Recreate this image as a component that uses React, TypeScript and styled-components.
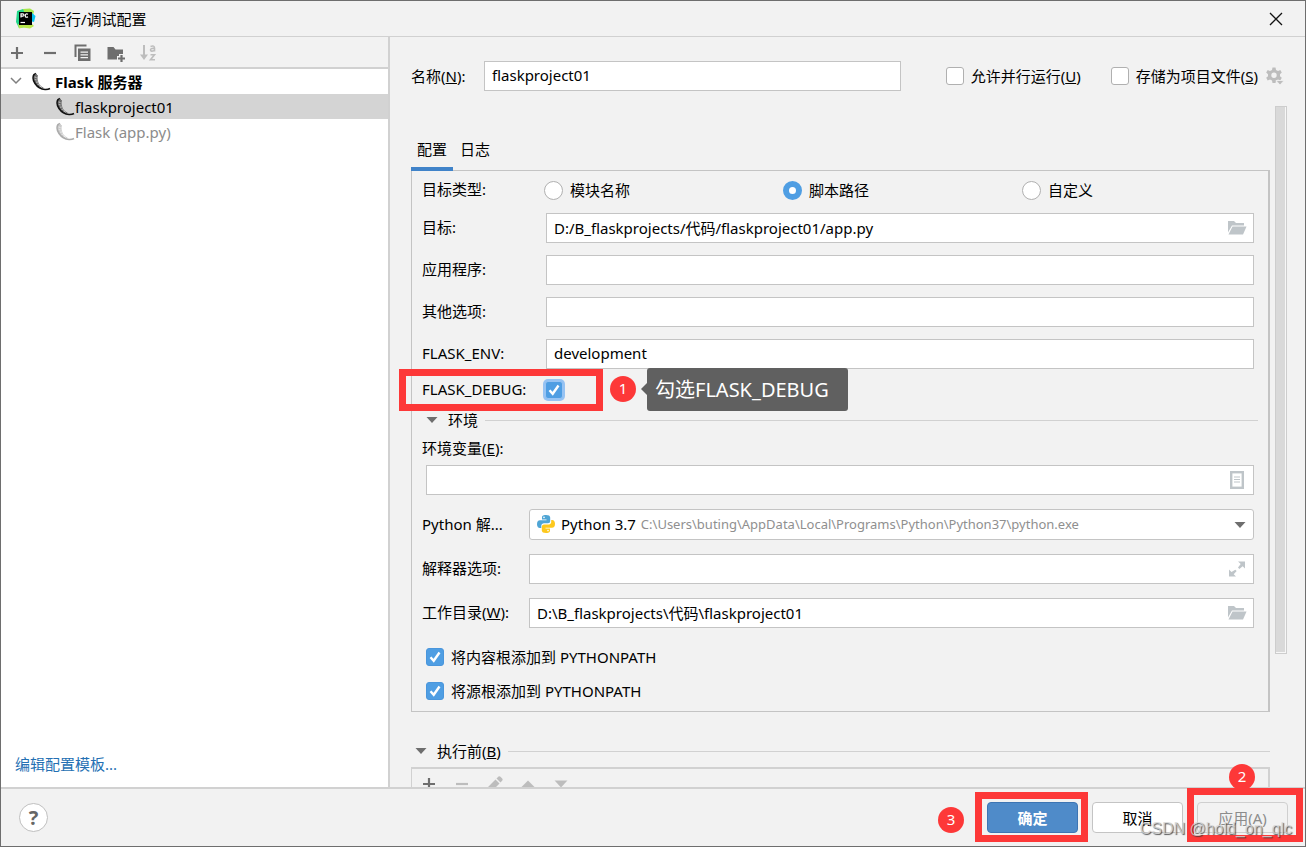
import React from 'react';
import styled, { createGlobalStyle, css } from 'styled-components';

const RED = '#fd3838';
const LINE = '#d1d1d1';
const EDGE = '#c4c4c4';

const GlobalStyle = createGlobalStyle`
  *, *::before, *::after { box-sizing: border-box; }
  body { margin: 0; background: #f2f2f2; }
  body, input, button, select {
    font-family: 'Noto Sans', 'Noto Sans CJK SC', sans-serif;
    font-size: 15px;
    line-height: 20px;
    color: #000;
  }
`;

const Dialog = styled.main`
  display: flex;
  flex-direction: column;
  height: 100vh;
  min-width: 960px;
  background: #f2f2f2;
  border: 1px solid #6e6e6e;
  overflow: hidden;
`;

const TitleBar = styled.header`
  display: flex;
  align-items: center;
  gap: 15px;
  height: 36px;
  padding: 0 22px 0 14px;
  border-bottom: 1px solid ${LINE};
`;

const Title = styled.h1`
  flex: 1;
  margin: 0;
  font-size: 15px;
  font-weight: 400;
`;

const IconButton = styled.button<{ $size?: number }>`
  display: flex;
  align-items: center;
  justify-content: center;
  flex: none;
  width: ${(p) => p.$size ?? 20}px;
  height: ${(p) => p.$size ?? 20}px;
  padding: 0;
  border: 0;
  background: none;
`;

const Body = styled.div`
  display: flex;
  flex: 1;
  min-height: 0;
  border-bottom: 2px solid ${LINE};
`;

const Sidebar = styled.aside`
  display: flex;
  flex-direction: column;
  flex: 0 0 389px;
  background: #fff;
  border-right: 2px solid ${LINE};
`;

const Toolbar = styled.div`
  display: flex;
  align-items: center;
  gap: 13px;
  height: 32px;
  padding: 2px 6px 0;
  background: #f2f2f2;
  border-bottom: 2px solid ${LINE};
`;

const Tree = styled.ul`
  flex: 1;
  margin: 0;
  padding: 0;
  list-style: none;
`;

const TreeRow = styled.li<{ $level?: number; $selected?: boolean; $muted?: boolean; $bold?: boolean }>`
  display: flex;
  align-items: center;
  gap: ${(p) => (p.$level ? 0 : 4)}px;
  height: 25px;
  padding-left: ${(p) => (p.$level ? 54 : 6)}px;
  background: ${(p) => (p.$selected ? '#d4d4d4' : 'transparent')};
  color: ${(p) => (p.$muted ? '#8c8c8c' : '#000')};
  font-weight: ${(p) => (p.$bold ? 700 : 400)};
`;

const TemplatesLink = styled.a`
  margin: 0 14px 13px;
  color: #2470b3;
  text-decoration: none;
`;

const Editor = styled.section`
  display: flex;
  flex-direction: column;
  flex: 1;
  min-width: 0;
`;

const NameRow = styled.div`
  display: flex;
  align-items: center;
  height: 69px;
  padding: 9px 20px 0 21px;
`;

const NameLabel = styled.label`
  flex: 0 0 73px;
`;

const NameChecks = styled.div`
  display: flex;
  align-items: center;
  gap: 30px;
  margin-left: 45px;
`;

const StoreGroup = styled.div`
  display: flex;
  align-items: center;
  gap: 7px;
`;

const Field = styled.div<{ $combo?: boolean }>`
  display: flex;
  align-items: center;
  flex: 1;
  min-width: 0;
  height: ${(p) => (p.$combo ? 31 : 30)}px;
  padding-right: ${(p) => (p.$combo ? 7 : 6)}px;
  background: #fff;
  border: 1px solid ${EDGE};
  border-radius: ${(p) => (p.$combo ? 3 : 0)}px;
`;

const TextInput = styled.input`
  flex: 1;
  min-width: 0;
  height: 28px;
  padding: 0 7px 2px;
  border: 0;
  outline: 0;
  background: transparent;
`;

const Scroller = styled.div`
  display: flex;
  flex: 1;
  min-height: 0;
  padding: 0 18px 0 21px;
  overflow: hidden;
`;

const Content = styled.div`
  flex: 1;
  min-width: 0;
  margin-right: 5px;
  padding-top: 27px;
`;

const ScrollTrack = styled.div`
  flex: 0 0 12px;
  height: 548px;
  background: #d9d9d9;
  border: 1px solid #cdcdcd;
  box-shadow: inset -1px -1px 0 #f7f7f7;
`;

const Tabs = styled.div`
  display: flex;
  align-items: stretch;
  gap: 1px;
  height: 37px;
`;

const Tab = styled.button<{ $active?: boolean }>`
  position: relative;
  padding: 0 6px 6px;
  border: 0;
  background: none;
  ${(p) =>
    p.$active &&
    css`
      &::after {
        content: '';
        position: absolute;
        left: 0;
        right: 0;
        bottom: -1px;
        height: 4px;
        background: #4083c9;
      }
    `}
`;

const Panel = styled.div`
  padding: 0 14px 3px 10px;
  border: 1px solid ${EDGE};
  border-right-width: 2px;
`;

const Row = styled.div<{ $gap?: number }>`
  display: flex;
  align-items: center;
  margin-bottom: ${(p) => p.$gap ?? 12}px;
`;

const RowLabel = styled.label<{ $width: number }>`
  flex: 0 0 ${(p) => p.$width}px;
  padding-bottom: 2px;
  white-space: nowrap;
`;

const TypeRow = styled.div`
  display: flex;
  align-items: center;
  height: 42px;
  margin-right: -7px;
  padding-bottom: 4px;
`;

const RadioGroup = styled.div`
  display: grid;
  grid-template-columns: repeat(3, 1fr);
  flex: 1;
`;

const RadioLabel = styled.label`
  display: flex;
  align-items: center;
  gap: 7px;
`;

const Radio = styled.input.attrs({ type: 'radio' })`
  appearance: none;
  width: 19px;
  height: 19px;
  margin: 0;
  border: 1px solid #b0b0b0;
  border-radius: 50%;
  background: #fff;
  &:checked {
    border: 6px solid #4f9ee3;
  }
`;

const CheckLabel = styled.label<{ $tall?: boolean }>`
  display: flex;
  align-items: center;
  flex: none;
  gap: 7px;
  height: ${(p) => (p.$tall ? 34 : 20)}px;
  padding-left: ${(p) => (p.$tall ? 4 : 0)}px;
`;

const CheckBox = styled.span`
  position: relative;
  display: block;
  width: 18px;
  height: 18px;
  svg {
    position: absolute;
    inset: 0;
    pointer-events: none;
  }
`;

const CheckInput = styled.input.attrs({ type: 'checkbox' })<{ $focus?: boolean }>`
  appearance: none;
  display: block;
  width: 18px;
  height: 18px;
  margin: 0;
  border: 1px solid #b0b0b0;
  border-radius: 3px;
  background: #fff;
  box-shadow: ${(p) => (p.$focus ? '0 0 0 2px #97c3f3' : 'none')};
  &:checked {
    border-color: ${(p) => (p.$focus ? '#97c3f3' : '#4a96dc')};
    background: #4f9ee3;
  }
  &:not(:checked) + svg {
    display: none;
  }
`;

const DebugRow = styled.div`
  position: relative;
  display: flex;
  align-items: center;
  height: 41px;
  margin-top: -12px;
`;

const Outline = styled.span<{ $left: number; $top: number; $width: number; $height: number }>`
  position: absolute;
  left: ${(p) => p.$left}px;
  top: ${(p) => p.$top}px;
  width: ${(p) => p.$width}px;
  height: ${(p) => p.$height}px;
  border: 7px solid ${RED};
  pointer-events: none;
`;

const Badge = styled.span<{ $left: number; $top: number }>`
  position: absolute;
  left: ${(p) => p.$left}px;
  top: ${(p) => p.$top}px;
  width: 26px;
  height: 26px;
  border-radius: 50%;
  background: ${RED};
  color: #fff;
  line-height: 24px;
  text-align: center;
`;

const Tip = styled.span`
  position: absolute;
  left: 225px;
  top: -1px;
  display: flex;
  align-items: center;
  height: 43px;
  padding: 0 19px 0 8px;
  border-radius: 3px;
  background: #606060;
  color: #fff;
  font-size: 20px;
  white-space: nowrap;
  &::before {
    content: '';
    position: absolute;
    left: -6px;
    top: 15px;
    border: 6px solid transparent;
    border-left: 0;
    border-right-color: #606060;
  }
`;

const SectionHead = styled.div<{ $outer?: boolean }>`
  display: flex;
  align-items: center;
  gap: 7px;
  height: ${(p) => (p.$outer ? 24 : 20)}px;
  margin: ${(p) => (p.$outer ? '27px 0 4px' : '0 -4px 0 0')};
  padding-left: 4px;
  svg {
    margin-right: 3px;
  }
  &::after {
    content: '';
    flex: 1;
    height: 1px;
    background: ${LINE};
  }
`;

const EnvLabel = styled.label`
  display: block;
  height: 35px;
  padding-top: 8px;
`;

const EnvRow = styled(Row)`
  padding-left: 4px;
`;

const Combo = styled.div`
  position: relative;
  display: flex;
  align-items: center;
  flex: 1;
  min-width: 0;
  height: 29px;
  padding: 0 0 2px 6px;
  gap: 5px;
  white-space: nowrap;
`;

const ComboSelect = styled.select`
  position: absolute;
  inset: 0;
  width: 100%;
  height: 100%;
  opacity: 0;
`;

const Path = styled.span`
  color: #8f8f8f;
  font-size: 13px;
`;

const TaskBar = styled.div`
  display: flex;
  align-items: center;
  gap: 13px;
  height: 34px;
  padding: 0 7px 2px;
  border: 2px solid ${LINE};
  border-left-width: 1px;
  border-bottom: 0;
`;

const Footer = styled.footer`
  display: flex;
  align-items: center;
  justify-content: space-between;
  flex: none;
  height: 57px;
  padding: 0 17px 0 18px;
`;

const HelpButton = styled.button`
  width: 29px;
  height: 29px;
  padding: 0;
  border: 1px solid #bfbfbf;
  border-radius: 50%;
  background: #fff;
  color: #666;
  font-size: 20px;
  font-weight: 700;
`;

const Actions = styled.div`
  display: flex;
  gap: 14px;
`;

const ActionSlot = styled.div`
  position: relative;
`;

const ActionButton = styled.button<{ $kind: 'primary' | 'plain' | 'disabled' }>`
  display: block;
  width: 91px;
  height: 31px;
  padding: 0;
  border: 1px solid #c4c4c4;
  border-radius: 4px;
  background: #fff;
  ${(p) =>
    p.$kind === 'primary' &&
    css`
      border-color: #3d75b3;
      background: #4f8bc9;
      color: #fff;
      font-weight: 700;
    `}
  ${(p) =>
    p.$kind === 'disabled' &&
    css`
      border-color: #cfcfcf;
      background: #f2f2f2;
      color: #8c8c8c;
    `}
`;

const Watermark = styled.span`
  position: absolute;
  right: -4px;
  top: 17px;
  color: rgba(215, 215, 215, 0.8);
  font-family: 'Liberation Sans', sans-serif;
  font-size: 16px;
  text-shadow: 1px 1px 1px rgba(50, 50, 50, 0.8);
  white-space: nowrap;
  pointer-events: none;
`;

const Mnemonic = ({ text, letter, end = '' }: { text: string; letter: string; end?: string }) => (
  <span>
    {text}(<u>{letter}</u>){end}
  </span>
);

const FlaskIcon = ({ faded }: { faded?: boolean }) => (
  <svg width="20" height="20" viewBox="0 0 20 20" opacity={faded ? 0.35 : 1} aria-hidden="true">
    <path d="M3.5 2C2 3.500 1.800 6.500 3.300 10C5.300 14 8.500 16.500 12.500 17.200C10 15.800 8 13.800 6.800 11.200C5.600 8.500 5.500 5.500 6.300 3.500Z" fill="#666" />
    <path d="M5 1.300L3 2.500C1.500 5 2 8.500 4 11.500C6.500 15.200 10 17.300 14 17.500C16 17.600 17.800 17.200 19 16.500" fill="none" stroke="#111" strokeWidth="1.500" />
    <path d="M4.500 1.500L6.500 3.500C5.800 5.500 6 8.500 7.200 11C8.300 13.200 10 15 12.500 16" fill="none" stroke="#444" strokeWidth="0.700" />
    <path d="M3.600 5L5.500 5.400M3.800 7.600L5.600 8M5 10.200L6.500 10M6.600 12.600L7.800 12M8.800 14.600L9.800 13.800" stroke="#eee" strokeWidth="0.700" />
  </svg>
);

const PyCharmIcon = () => (
  <svg width="21" height="21" viewBox="0 0 21 21" aria-hidden="true">
    <path d="M2 3L8 1L13 3L10 19L4 20L1 14Z" fill="#21d789" />
    <path d="M8 1L15 0.500L19 3L18 8L10 6Z" fill="#a8e64a" />
    <path d="M17 5L20.500 8L19 14L15 13Z" fill="#07c3f2" />
    <path d="M3 16L17 16L19 18L15 20.500L8 19.500L4 20.500Z" fill="#b8e84c" />
    <rect x="4" y="4" width="13" height="13" />
    <path d="M6 9.500V5.800H7.700Q9 5.800 9 7T7.700 8.200H6.300M13 6.300Q10.500 5 10.300 7.500T13 8.900" fill="none" stroke="#fff" strokeWidth="1.200" />
    <path d="M5.500 14.500H10" stroke="#fff" strokeWidth="1.200" />
  </svg>
);

const PythonIcon = () => (
  <svg width="20" height="20" viewBox="0 0 20 20" aria-hidden="true">
    <path d="M10 1C6.500 1 6 2.200 6 3.500V5.500H10.500V6.200H4C2 6.200 1 7.800 1 10.200S2.200 14 3.800 14H5.300V11.800C5.300 10.200 6.500 9.300 8 9.300H12C13.300 9.300 14.200 8.300 14.200 7V3.500C14.200 1.800 12.500 1 10 1Z" fill="#4fa5d5" />
    <path d="M10 19C13.500 19 14 17.800 14 16.500V14.500H9.500V13.800H16C18 13.800 19 12.200 19 9.800S17.800 6 16.200 6H15.200V8.200C15.200 9.800 13.500 10.500 12 10.500H8C6.700 10.500 5.800 11.700 5.800 13V16.500C5.800 18.200 7.500 19 10 19Z" fill="#fdc81d" />
    <circle cx="8" cy="3.400" r="0.800" fill="#fff" />
    <circle cx="12" cy="16.600" r="0.800" fill="#fff" />
  </svg>
);

const PlusIcon = () => (
  <svg width="14" height="14" viewBox="0 0 14 14" aria-hidden="true">
    <path d="M7 1V13M1 7H13" stroke="#6e6e6e" strokeWidth="2.200" />
  </svg>
);

const MinusIcon = ({ color = '#6e6e6e' }: { color?: string }) => (
  <svg width="14" height="14" viewBox="0 0 14 14" aria-hidden="true">
    <path d="M1 7H13" stroke={color} strokeWidth="2.200" />
  </svg>
);

const CopyIcon = () => (
  <svg width="18" height="18" viewBox="0 0 18 18" aria-hidden="true">
    <path d="M1.500 13V1.500H12.500" fill="none" stroke="#6e6e6e" strokeWidth="2" />
    <path d="M4 4.500H16.500V17H4ZM6.500 7.500V8.700H14V7.500ZM6.500 10.300V11.500H14V10.300ZM6.500 13.100V14.300H14V13.100Z" fill="#6e6e6e" fillRule="evenodd" />
  </svg>
);

const NewFolderIcon = () => (
  <svg width="20" height="18" viewBox="0 0 20 18" aria-hidden="true">
    <path d="M1.500 3H7.500L9.500 5.500H17V10H13V12H11V15.500H1.500Z" fill="#6e6e6e" />
    <path d="M15.500 11V18M12 14.500H19" stroke="#6e6e6e" strokeWidth="2.200" />
  </svg>
);

const SortIcon = () => (
  <svg width="18" height="18" viewBox="0 0 18 18" fill="none" stroke="#bdbdbd" aria-hidden="true">
    <path d="M4 1V13" strokeWidth="2" />
    <path d="M0 10.500H8L4 16Z" fill="#bdbdbd" stroke="none" />
    <path d="M10.500 2.500Q14.500 1 14.500 4V7.500M14.500 4.500Q10.500 4 10.500 6T14.500 6.500M10.500 10.800H14.500L10.500 15.800H15" strokeWidth="1.600" />
  </svg>
);

const ChevronIcon = () => (
  <svg width="14" height="14" viewBox="0 0 14 14" aria-hidden="true">
    <path d="M1 3L6 8L11 3" fill="none" stroke="#7f7f7f" strokeWidth="1.500" />
  </svg>
);

const CloseIcon = () => (
  <svg width="14" height="14" viewBox="0 0 14 14" aria-hidden="true">
    <path d="M1 1L13 13M13 1L1 13" stroke="#111" strokeWidth="1.300" />
  </svg>
);

const GearIcon = () => (
  <svg width="18" height="18" viewBox="0 0 18 18" aria-hidden="true">
    <g fill="#bdbdbd">
      <path d="M6.500 0.500H9.500L10 3L12 4L14.300 3L15.800 5.600L14 7.200V9.200L15.800 10.800L14.300 13.400L12 12.500L10 13.500L9.500 16H6.500L6 13.500L4 12.500L1.700 13.400L0.200 10.800L2 9.200V7.200L0.200 5.600L1.700 3L4 4L6 3ZM8 5.500A2.700 2.700 0 1 0 8 10.900A2.700 2.700 0 1 0 8 5.500Z" fillRule="evenodd" />
      <path d="M10 13.500H18L14 18Z" stroke="#f2f2f2" strokeWidth="0.800" />
    </g>
  </svg>
);

const FolderIcon = () => (
  <svg width="20" height="16" viewBox="0 0 20 16" aria-hidden="true">
    <path d="M1 1H7L9 3H17V5.500H5L1 12.500Z" fill="#bfc5c9" />
    <path d="M5.500 6.500H19.500L16 14.500H1.500Z" fill="#bfc5c9" />
  </svg>
);

const ListIcon = () => (
  <svg width="20" height="20" viewBox="0 0 20 20" aria-hidden="true">
    <rect x="4.200" y="2.200" width="11.600" height="15.600" fill="none" stroke="#bfc5c9" strokeWidth="2.400" />
    <path d="M7 7H13M7 9.500H13M7 12H13" stroke="#bfc5c9" strokeWidth="1.200" />
  </svg>
);

const ExpandIcon = () => (
  <svg width="20" height="20" viewBox="0 0 20 20" aria-hidden="true">
    <path d="M11 2.500H18V9.500L15.700 7.200L12.300 10L11 8.600L13.700 5ZM2 10.500V17.500H9L6.700 15.200L9.700 12L8.300 10.700L4.500 13Z" fill="#bfc5c9" />
  </svg>
);

const Triangle = ({ color = '#6e6e6e', up, size = 12 }: { color?: string; up?: boolean; size?: number }) => (
  <svg width={size} height={size} viewBox="0 0 12 12" aria-hidden="true">
    <path d={up ? 'M0 9L6 3L12 9Z' : 'M0.500 3L6 9L11.500 3Z'} fill={color} />
  </svg>
);

const PencilIcon = () => (
  <svg width="18" height="18" viewBox="0 0 18 18" fill="#bdbdbd" aria-hidden="true">
    <path d="M1 17V13L9.500 4.500L13.500 8.500L5 17ZM10.500 3.500L12.500 1.500Q13.500 0.800 14.500 1.800L16.200 3.500Q17 4.500 16.300 5.500L14.500 7.500Z" />
  </svg>
);

const Check = ({ checked, focus }: { checked?: boolean; focus?: boolean }) => (
  <CheckBox>
    <CheckInput defaultChecked={checked} $focus={focus} />
    <svg width="18" height="18" viewBox="0 0 18 18" aria-hidden="true">
      <path d="M4.500 9.200L7.700 12.800L13.500 4.500" fill="none" stroke="#fff" strokeWidth="2.400" />
    </svg>
  </CheckBox>
);

const PATH = 'C:\\Users\\buting\\AppData\\Local\\Programs\\Python\\Python37\\python.exe';

export default function App() {
  return (
    <>
      <GlobalStyle />
      <Dialog>
        <TitleBar>
          <PyCharmIcon />
          <Title>运行/调试配置</Title>
          <IconButton $size={14} aria-label="关闭"><CloseIcon /></IconButton>
        </TitleBar>
        <Body>
          <Sidebar>
            <Toolbar>
              <IconButton aria-label="添加"><PlusIcon /></IconButton>
              <IconButton aria-label="移除"><MinusIcon /></IconButton>
              <IconButton aria-label="复制"><CopyIcon /></IconButton>
              <IconButton aria-label="新建文件夹"><NewFolderIcon /></IconButton>
              <IconButton aria-label="排序"><SortIcon /></IconButton>
            </Toolbar>
            <Tree>
              <TreeRow $bold>
                <IconButton aria-label="折叠"><ChevronIcon /></IconButton>
                <FlaskIcon />
                Flask 服务器
              </TreeRow>
              <TreeRow $level={1} $selected><FlaskIcon />flaskproject01</TreeRow>
              <TreeRow $level={1} $muted><FlaskIcon faded />Flask (app.py)</TreeRow>
            </Tree>
            <TemplatesLink href="#templates">编辑配置模板...</TemplatesLink>
          </Sidebar>
          <Editor>
            <NameRow>
              <NameLabel htmlFor="name"><Mnemonic text="名称" letter="N" end=":" /></NameLabel>
              <Field><TextInput id="name" defaultValue="flaskproject01" /></Field>
              <NameChecks>
                <CheckLabel><Check /><Mnemonic text="允许并行运行" letter="U" /></CheckLabel>
                <StoreGroup>
                  <CheckLabel><Check /><Mnemonic text="存储为项目文件" letter="S" /></CheckLabel>
                  <IconButton aria-label="设置"><GearIcon /></IconButton>
                </StoreGroup>
              </NameChecks>
            </NameRow>
            <Scroller>
              <Content>
                <Tabs role="tablist">
                  <Tab role="tab" $active>配置</Tab>
                  <Tab role="tab">日志</Tab>
                </Tabs>
                <Panel>
                  <TypeRow>
                    <RowLabel as="span" $width={122}>目标类型:</RowLabel>
                    <RadioGroup>
                      <RadioLabel><Radio name="type" />模块名称</RadioLabel>
                      <RadioLabel><Radio name="type" defaultChecked />脚本路径</RadioLabel>
                      <RadioLabel><Radio name="type" />自定义</RadioLabel>
                    </RadioGroup>
                  </TypeRow>
                  <Row>
                    <RowLabel $width={124} htmlFor="target">目标:</RowLabel>
                    <Field>
                      <TextInput id="target" defaultValue="D:/B_flaskprojects/代码/flaskproject01/app.py" />
                      <IconButton aria-label="浏览"><FolderIcon /></IconButton>
                    </Field>
                  </Row>
                  <Row>
                    <RowLabel $width={124} htmlFor="app">应用程序:</RowLabel>
                    <Field><TextInput id="app" /></Field>
                  </Row>
                  <Row>
                    <RowLabel $width={124} htmlFor="extra">其他选项:</RowLabel>
                    <Field><TextInput id="extra" /></Field>
                  </Row>
                  <Row>
                    <RowLabel $width={124} htmlFor="env">FLASK_ENV:</RowLabel>
                    <Field><TextInput id="env" defaultValue="development" /></Field>
                  </Row>
                  <DebugRow>
                    <CheckLabel>
                      <RowLabel as="span" $width={116}>FLASK_DEBUG:</RowLabel>
                      <Check checked focus />
                    </CheckLabel>
                    <Outline $left={-23} $top={0} $width={204} $height={42} />
                    <Badge $left={188} $top={7}>1</Badge>
                    <Tip>勾选FLASK_DEBUG</Tip>
                  </DebugRow>
                  <SectionHead><Triangle />环境</SectionHead>
                  <EnvLabel htmlFor="vars"><Mnemonic text="环境变量" letter="E" end=":" /></EnvLabel>
                  <EnvRow $gap={14}>
                    <Field>
                      <TextInput id="vars" />
                      <IconButton aria-label="编辑变量"><ListIcon /></IconButton>
                    </Field>
                  </EnvRow>
                  <Row $gap={14}>
                    <RowLabel $width={107} htmlFor="sdk">Python 解...</RowLabel>
                    <Field $combo>
                      <Combo>
                        <PythonIcon />
                        <span>Python 3.7</span>
                        <Path>{PATH}</Path>
                        <ComboSelect id="sdk"><option>Python 3.7</option></ComboSelect>
                      </Combo>
                      <Triangle />
                    </Field>
                  </Row>
                  <Row $gap={14}>
                    <RowLabel $width={107} htmlFor="opts">解释器选项:</RowLabel>
                    <Field>
                      <TextInput id="opts" />
                      <IconButton aria-label="展开"><ExpandIcon /></IconButton>
                    </Field>
                  </Row>
                  <Row>
                    <RowLabel $width={107} htmlFor="cwd"><Mnemonic text="工作目录" letter="W" end=":" /></RowLabel>
                    <Field>
                      <TextInput id="cwd" defaultValue={'D:\\B_flaskprojects\\代码\\flaskproject01'} />
                      <IconButton aria-label="浏览"><FolderIcon /></IconButton>
                    </Field>
                  </Row>
                  <CheckLabel $tall><Check checked />将内容根添加到 PYTHONPATH</CheckLabel>
                  <CheckLabel $tall><Check checked />将源根添加到 PYTHONPATH</CheckLabel>
                </Panel>
                <SectionHead $outer><Triangle /><Mnemonic text="执行前" letter="B" /></SectionHead>
                <TaskBar>
                  <IconButton aria-label="添加任务"><PlusIcon /></IconButton>
                  <IconButton aria-label="移除任务"><MinusIcon color="#bdbdbd" /></IconButton>
                  <IconButton aria-label="编辑任务"><PencilIcon /></IconButton>
                  <IconButton aria-label="上移"><Triangle up color="#bdbdbd" size={14} /></IconButton>
                  <IconButton aria-label="下移"><Triangle color="#bdbdbd" size={14} /></IconButton>
                </TaskBar>
              </Content>
              <ScrollTrack />
            </Scroller>
          </Editor>
        </Body>
        <Footer>
          <HelpButton aria-label="帮助">?</HelpButton>
          <Actions>
            <ActionSlot>
              <ActionButton $kind="primary">确定</ActionButton>
              <Outline $left={-12} $top={-10} $width={113} $height={50} />
              <Badge $left={-49} $top={5}>3</Badge>
            </ActionSlot>
            <ActionSlot><ActionButton $kind="plain">取消</ActionButton></ActionSlot>
            <ActionSlot>
              <ActionButton $kind="disabled" disabled>应用(A)</ActionButton>
              <Badge $left={32} $top={-38}>2</Badge>
              <Outline $left={-10} $top={-14} $width={116} $height={54} />
              <Watermark>CSDN @hold_on_qlc</Watermark>
            </ActionSlot>
          </Actions>
        </Footer>
      </Dialog>
    </>
  );
}
